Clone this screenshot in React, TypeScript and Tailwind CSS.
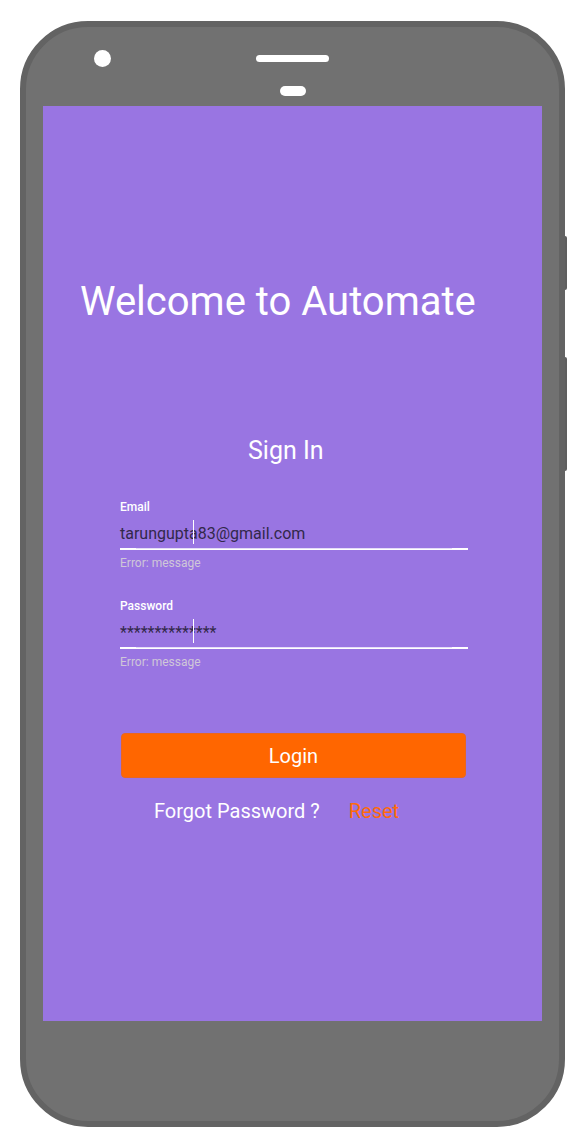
import React from "react";

function Field({ label, value }: { label: string; value: string }) {
  return (
    <div className="flex flex-col">
      <div className="text-[12px] leading-[12px] font-medium text-white">{label}</div>
      <div className="relative mt-[13px] h-[16px] text-[16px] leading-[16px] text-[#32284a] whitespace-nowrap">
        {value}
        <div className="absolute left-[73px] top-[-6px] h-[24px] w-px bg-white" />
      </div>
      <div className="mt-[6px] h-[2px] w-[348px] bg-white flex">
        <div className="ml-[16px] mr-[16px] h-px w-full bg-[#e4dbf8]" />
      </div>
      <div className="mt-[7px] text-[12px] leading-[12px] text-[#cfc7d8]">Error: message</div>
    </div>
  );
}

export default function App() {
  return (
    <div
      className="w-[586px] h-[1148px] bg-white pt-[21px] pl-[20px]"
      style={{ fontFamily: "Roboto, 'Noto Sans', Arial, sans-serif" }}
    >
      <div className="relative w-[545px] h-[1106px]">
        <div className="w-full h-full rounded-[68px] border-[6px] border-[#636363] bg-[#717171] flex flex-col">
          {/* top bezel */}
          <div className="pt-[23px] flex items-start">
            <div className="flex-1">
              <div className="ml-[68px] w-[17px] h-[17px] rounded-full bg-white" />
            </div>
            <div className="mt-[5px] w-[73px] h-[7px] rounded-full bg-white" />
            <div className="flex-1" />
          </div>
          <div className="mt-[19px] mx-auto w-[26px] h-[10px] rounded-full bg-white" />
          {/* screen */}
          <div className="mt-[10px] mx-[17px] h-[915px] bg-[#9975e2] flex flex-col">
            <div className="mt-[176px] pl-[37px] text-[40px] leading-[40px] text-white whitespace-nowrap">
              Welcome to Automate
            </div>
            <div className="mt-[116px] pl-[205px] text-[25px] leading-[25px] text-white">Sign In</div>
            <div className="mt-[38px] pl-[77px] flex flex-col">
              <Field label="Email" value="tarungupta83@gmail.com" />
              <div className="mt-[31px]">
                <Field label="Password" value="**************" />
              </div>
              <button className="mt-[65px] ml-px w-[345px] h-[45px] rounded-[4px] bg-[#ff6600] border border-[#e9661f] text-white text-[20px] leading-[20px] flex items-center justify-center">
                Login
              </button>
            </div>
            <div className="mt-[23px] pl-[111px] flex text-[20px] leading-[20px] whitespace-nowrap">
              <span className="text-white">Forgot Password ?</span>
              <span className="ml-[29px] text-[#ff6a0a]">Reset</span>
            </div>
          </div>
        </div>
        {/* side buttons */}
        <div className="absolute left-[545px] top-[215px] w-[2px] h-[54px] bg-[#5f5f5f] rounded-r-sm" />
        <div className="absolute left-[545px] top-[336px] w-[2px] h-[114px] bg-[#5f5f5f] rounded-r-sm" />
      </div>
    </div>
  );
}
